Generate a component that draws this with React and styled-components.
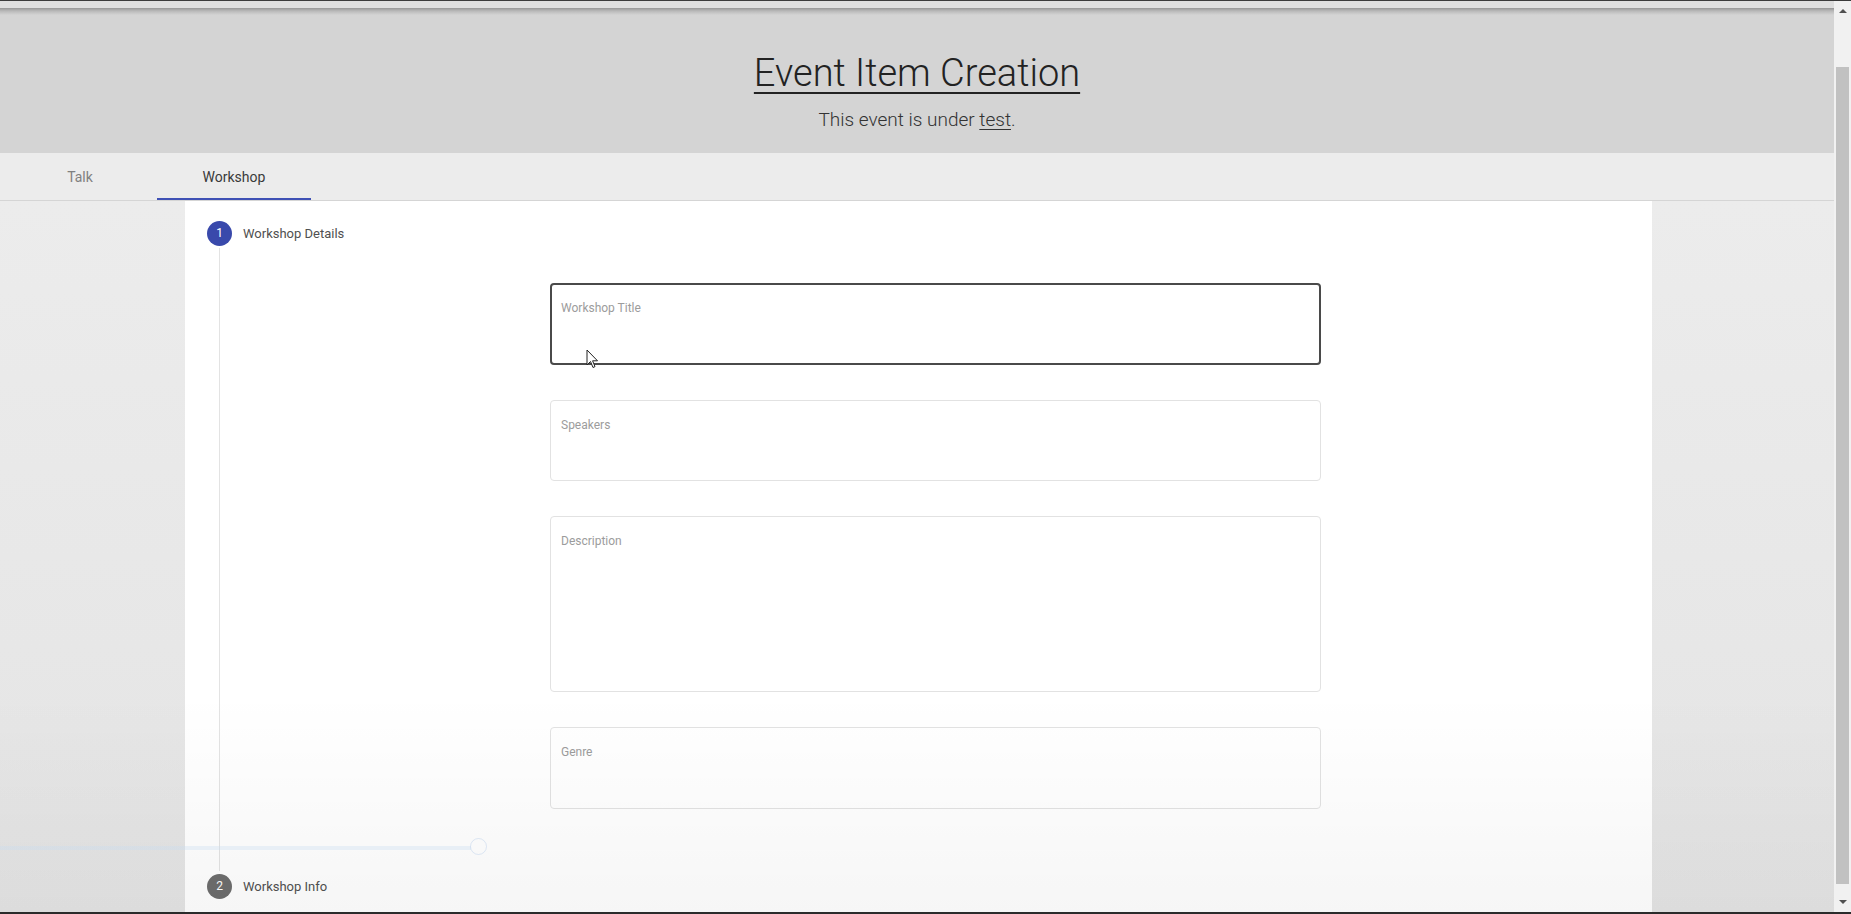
import React from "react";
import styled, { createGlobalStyle } from "styled-components";

const GlobalStyle = createGlobalStyle`
  html, body {
    margin: 0;
    padding: 0;
    overflow: hidden;
    background: #ebebeb;
  }
  body {
    font-family: Roboto, "Liberation Sans", sans-serif;
  }
`;

const Frame = styled.div`
  position: relative;
  width: 1851px;
  height: 914px;
  display: flex;
  flex-direction: column;
  overflow: hidden;
  border-top: 1px solid #3a3a3a;
  border-bottom: 2px solid #2b2b2b;
  box-sizing: border-box;
`;

const Row = styled.div`
  flex: 1;
  display: flex;
  min-height: 0;
`;

const Main = styled.div`
  flex: 1;
  display: flex;
  flex-direction: column;
  min-width: 0;
`;

const TopStrip = styled.div`
  height: 7px;
  background: #dedede;
`;

const Header = styled.header`
  height: 145px;
  box-sizing: border-box;
  background: linear-gradient(#959595 0px, #b9b9b9 3px, #d4d4d4 7px, #d4d4d4 100%);
  display: flex;
  flex-direction: column;
  align-items: center;
  padding-top: 42px;
  color: #222;
`;

const Title = styled.h1`
  margin: 0;
  font-weight: 300;
  font-size: 38px;
  line-height: 46px;
  text-decoration: underline;
  text-decoration-thickness: 2px;
  text-underline-offset: 6px;
`;

const Subtitle = styled.p`
  margin: 12px 0 0;
  font-weight: 300;
  font-size: 19px;
  color: #333;
  span {
    text-decoration: underline;
    text-underline-offset: 3px;
  }
`;

const TabBar = styled.nav`
  display: flex;
  height: 47px;
  padding-left: 3px;
  background: #ececec;
  border-bottom: 1px solid #d5d5d5;
`;

const Tab = styled.div`
  width: 154px;
  box-sizing: border-box;
  display: flex;
  align-items: center;
  justify-content: center;
  font-size: 14px;
  color: ${(p) => (p.$active ? "#3a3a3a" : "#808080")};
  border-bottom: 2px solid ${(p) => (p.$active ? "#3f51b5" : "transparent")};
  padding-top: 2px;
`;

const Body = styled.div`
  flex: 1;
  display: flex;
  min-height: 0;
  background: linear-gradient(#ececec, #e4e4e4);
`;

const Card = styled.section`
  margin-left: 185px;
  width: 1467px;
  background: #fff;
  box-sizing: border-box;
  padding: 19px 0 0 22px;
`;

const StepHead = styled.div`
  display: flex;
  align-items: center;
  gap: 11px;
  height: 26px;
`;

const StepIcon = styled.div`
  width: 25px;
  height: 25px;
  border-radius: 50%;
  background: ${(p) => (p.$active ? "#3949ab" : "#6d6d6d")};
  color: #fff;
  font-size: 12px;
  display: flex;
  align-items: center;
  justify-content: center;
`;

const StepLabel = styled.span`
  font-size: 13px;
  color: #505050;
`;

const StepContent = styled.div`
  margin-left: 12px;
  border-left: 1px solid #e3e3e3;
  padding: 35px 0 62px 330px;
  margin-top: 2px;
  margin-bottom: 2px;
`;

const Form = styled.div`
  width: 771px;
  display: flex;
  flex-direction: column;
  gap: 35px;
`;

const Field = styled.div`
  height: ${(p) => p.$h}px;
  box-sizing: border-box;
  border: ${(p) => (p.$focused ? "2px solid #4a4a4a" : "1px solid #e2e2e2")};
  border-radius: 4px;
  padding: ${(p) => (p.$focused ? "12px 9px" : "13px 10px")};
  background: #fff;
`;

const FieldLabel = styled.span`
  font-size: 12px;
  color: #9c9c9c;
`;

const Scrollbar = styled.div`
  width: 17px;
  background: #f1f1f1;
  display: flex;
  flex-direction: column;
  align-items: center;
  padding: 4px 0 4px;
  box-sizing: border-box;
`;

const Arrow = styled.div`
  width: 0;
  height: 0;
  border-left: 4px solid transparent;
  border-right: 4px solid transparent;
  ${(p) => (p.$down ? "border-top: 4px solid #505050;" : "border-bottom: 4px solid #505050;")}
  margin: 4px 0;
`;

const Thumb = styled.div`
  width: 13px;
  flex: 1;
  margin: 50px 0 12px;
  background: #c1c1c1;
`;

const Fade = styled.div`
  position: absolute;
  left: 0;
  right: 17px;
  bottom: 0;
  height: 220px;
  pointer-events: none;
  background: linear-gradient(rgba(0, 0, 0, 0), rgba(0, 0, 0, 0.035));
`;

const Progress = styled.div`
  position: absolute;
  left: 0;
  top: 845px;
  width: 471px;
  height: 4px;
  background: rgba(200, 220, 240, 0.35);
  &::after {
    content: "";
    position: absolute;
    left: 470px;
    top: -8px;
    width: 17px;
    height: 17px;
    border-radius: 50%;
    border: 1px solid rgba(190, 210, 235, 0.5);
    box-sizing: border-box;
  }
`;

const Cursor = styled.svg`
  position: absolute;
  left: 586px;
  top: 348px;
`;

const fields = [
  { label: "Workshop Title", h: 82, focused: true },
  { label: "Speakers", h: 81 },
  { label: "Description", h: 176 },
  { label: "Genre", h: 82 },
];

export default function App() {
  return (
    <>
      <GlobalStyle />
      <Frame>
        <Row>
          <Main>
            <TopStrip />
            <Header>
              <Title>Event Item Creation</Title>
              <Subtitle>
                This event is under <span>test</span>.
              </Subtitle>
            </Header>
            <TabBar>
              <Tab>Talk</Tab>
              <Tab $active>Workshop</Tab>
            </TabBar>
            <Body>
              <Card>
                <StepHead>
                  <StepIcon $active>1</StepIcon>
                  <StepLabel>Workshop Details</StepLabel>
                </StepHead>
                <StepContent>
                  <Form>
                    {fields.map((f) => (
                      <Field key={f.label} $h={f.h} $focused={f.focused}>
                        <FieldLabel>{f.label}</FieldLabel>
                      </Field>
                    ))}
                  </Form>
                </StepContent>
                <StepHead>
                  <StepIcon>2</StepIcon>
                  <StepLabel>Workshop Info</StepLabel>
                </StepHead>
              </Card>
            </Body>
          </Main>
          <Scrollbar>
            <Arrow />
            <Thumb />
            <Arrow $down />
          </Scrollbar>
        </Row>
        <Fade />
        <Progress />
        <Cursor width="13" height="20" viewBox="0 0 13 20">
          <path
            d="M1 1 L1 16 L4.5 12.5 L7 18.5 L9 17.6 L6.6 11.8 L11.5 11.8 Z"
            fill="#fff"
            stroke="#222"
            strokeWidth="1"
            strokeLinejoin="round"
          />
        </Cursor>
      </Frame>
    </>
  );
}
